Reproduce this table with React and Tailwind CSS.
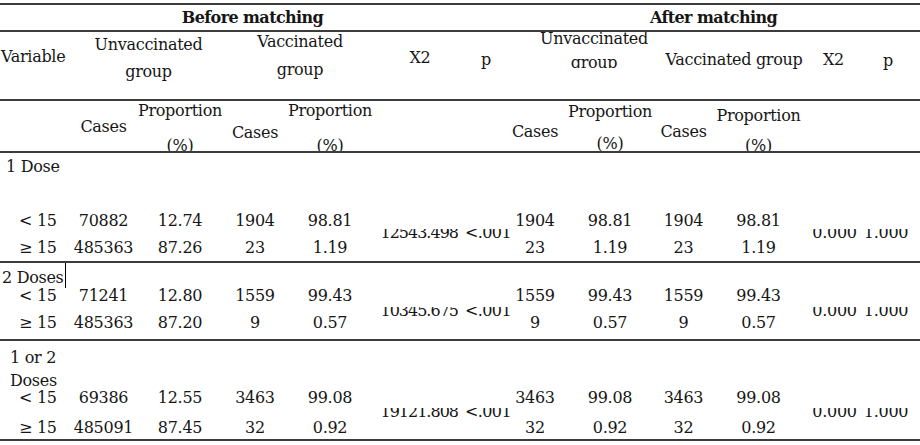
const GRID =
  'grid grid-cols-[72px_63px_90px_60px_90px_90px_40px_60px_90px_57px_93px_57px_58px]';

const BLOCKS = [
  {
    id: 'one',
    rows: [
      ['< 15', '70882', '12.74', '1904', '98.81', '1904', '98.81', '1904', '98.81'],
      ['≥ 15', '485363', '87.26', '23', '1.19', '23', '1.19', '23', '1.19'],
    ],
    x2: '12543.498',
  },
  {
    id: 'two',
    rows: [
      ['< 15', '71241', '12.80', '1559', '99.43', '1559', '99.43', '1559', '99.43'],
      ['≥ 15', '485363', '87.20', '9', '0.57', '9', '0.57', '9', '0.57'],
    ],
    x2: '10345.675',
  },
  {
    id: 'both',
    rows: [
      ['< 15', '69386', '12.55', '3463', '99.08', '3463', '99.08', '3463', '99.08'],
      ['≥ 15', '485091', '87.45', '32', '0.92', '32', '0.92', '32', '0.92'],
    ],
    x2: '19121.808',
  },
];

// the stat values sit half hidden, as in the source document
function Clipped({ children, className = 'justify-center' }) {
  return (
    <div className={'row-span-2 flex items-center ' + className}>
      <div className="h-[10px] shrink-0 overflow-hidden">
        <div className="-mt-[6px] leading-[20px] whitespace-nowrap">{children}</div>
      </div>
    </div>
  );
}

function SubRow({ cells, pad, x2, first }) {
  const [label, ...vals] = cells;
  const before = vals.slice(0, 4);
  const after = vals.slice(4);
  return (
    <>
      <div className={'pl-[19px] whitespace-nowrap ' + pad}>{label}</div>
      {before.map((v, i) => (
        <div key={'b' + i} className={'text-center ' + pad}>{v}</div>
      ))}
      {first && <Clipped className="justify-end pr-[7px] tracking-[-1px]">{x2}</Clipped>}
      {first && <Clipped className="justify-start tracking-[-0.6px]">&lt;.001</Clipped>}
      {after.map((v, i) => (
        <div key={'a' + i} className={'text-center ' + pad}>{v}</div>
      ))}
      {first && <Clipped className="justify-center pl-[2px]">0.000</Clipped>}
      {first && <Clipped className="justify-center pr-[10px]">1.000</Clipped>}
    </>
  );
}

export default function App() {
  const [one, two, both] = BLOCKS;
  return (
    <div className="w-[920px] h-[445px] bg-white text-[#161616] text-[16px] leading-[20px] font-['DejaVu_Serif','Liberation_Serif',serif] tracking-[-0.3px] overflow-hidden">
      <div className="mt-[3px] border-t-2 border-[#3c3c3c]">
        {/* group titles */}
        <div className="flex h-[27px] border-b-2 border-[#3c3c3c] font-bold tracking-[-0.6px]">
          <div className="w-[505px] pt-[3px] text-center">Before matching</div>
          <div className="flex-1 pt-[3px] pl-[2px] text-center">After matching</div>
        </div>

        {/* column heads */}
        <div className={GRID + ' h-[69px] border-b-2 border-[#3c3c3c]'}>
          <div className="pl-[1px] pt-[15px]">Variable</div>
          <div className="col-span-2 -mt-[1px] text-center leading-[27px]">
            Unvaccinated<br />group
          </div>
          <div className="col-span-2 -mt-[4px] text-center leading-[28px]">
            Vaccinated<br />group
          </div>
          <div className="pt-[16px] text-center">X2</div>
          <div className="pt-[18px] pl-[2px] text-center">p</div>
          <div className="col-span-2 h-[36px] overflow-hidden pl-[28px] text-center">
            <div className="-mt-[5px] leading-[24px]">
              Unvaccinated<br />group
            </div>
          </div>
          <div className="col-span-2 pt-[18px] pl-[8px] text-center whitespace-nowrap">
            Vaccinated group
          </div>
          <div className="pt-[18px] text-center">X2</div>
          <div className="pt-[19px] pr-[6px] text-center">p</div>
        </div>

        {/* sub heads */}
        <div className={GRID + ' h-[52px] border-b-2 border-[#3c3c3c] overflow-hidden'}>
          <div />
          <div className="pt-[16px] text-center">Cases</div>
          <div className="text-center">
            <div>Proportion</div>
            <div className="mt-[15px]">(%)</div>
          </div>
          <div className="pt-[22px] text-center">Cases</div>
          <div className="text-center">
            <div>Proportion</div>
            <div className="mt-[15px]">(%)</div>
          </div>
          <div />
          <div />
          <div className="pt-[21px] text-center">Cases</div>
          <div className="text-center">
            <div className="pt-[1px]">Proportion</div>
            <div className="mt-[12px]">(%)</div>
          </div>
          <div className="pt-[21px] text-center">Cases</div>
          <div className="text-center">
            <div className="pt-[5px]">Proportion</div>
            <div className="mt-[10px]">(%)</div>
          </div>
          <div />
          <div />
        </div>

        {/* 1 dose */}
        <div className={GRID + ' grid-rows-[54px_28px_26px] h-[110px] border-b-2 border-[#3c3c3c]'}>
          <div className="col-span-full pl-[6px] pt-[4px]">1 Dose</div>
          <SubRow cells={one.rows[0]} pad="pt-[4px]" x2={one.x2} first />
          <SubRow cells={one.rows[1]} pad="pt-[3px]" />
        </div>

        {/* 2 doses */}
        <div className={GRID + ' grid-rows-[22px_23px_31px] h-[78px] border-b-2 border-[#3c3c3c]'}>
          <div className="col-span-full flex items-start pl-[2px]">
            <span className="pt-[5px]">2 Doses</span>
            <span className="ml-[1px] h-[25px] w-px bg-black" />
          </div>
          <SubRow cells={two.rows[0]} pad="pt-[1px]" x2={two.x2} first />
          <SubRow cells={two.rows[1]} pad="pt-[5px]" />
        </div>

        {/* 1 or 2 doses */}
        <div className={GRID + ' grid-rows-[46px_25px_27px] h-[100px] border-b-2 border-[#3c3c3c]'}>
          <div className="col-span-full pl-[10px] pt-[5px] leading-[23px]">
            1 or 2<br />Doses
          </div>
          <SubRow cells={both.rows[0]} pad="pt-[1px]" x2={both.x2} first />
          <SubRow cells={both.rows[1]} pad="pt-[6px]" />
        </div>
      </div>
    </div>
  );
}
